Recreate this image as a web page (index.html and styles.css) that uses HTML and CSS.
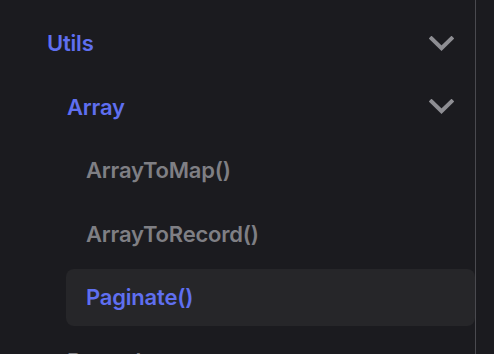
FILE: index.html
```html
<!DOCTYPE html>
<html lang="en">
<head>
<meta charset="utf-8">
<title>Sidebar</title>
<link rel="stylesheet" href="styles.css">
</head>
<body>
<div class="layout">
  <nav class="sidebar">
    <div class="row lvl0">
      <span class="label active">Utils</span>
      <svg class="chev" viewBox="0 0 25 15" width="25" height="15"><path d="M2.5 2.5 L12.5 12.2 L22.5 2.5" fill="none" stroke="currentColor" stroke-width="4" stroke-linecap="square"/></svg>
    </div>
    <div class="row lvl1">
      <span class="label active">Array</span>
      <svg class="chev" viewBox="0 0 25 15" width="25" height="15"><path d="M2.5 2.5 L12.5 12.2 L22.5 2.5" fill="none" stroke="currentColor" stroke-width="4" stroke-linecap="square"/></svg>
    </div>
    <div class="row lvl2">
      <span class="label">ArrayToMap()</span>
    </div>
    <div class="row lvl2">
      <span class="label">ArrayToRecord()</span>
    </div>
    <div class="row lvl2 current">
      <span class="label active">Paginate()</span>
    </div>
    <div class="row lvl1">
      <span class="label">Record</span>
    </div>
  </nav>
  <div class="content"></div>
</div>
</body>
</html>
```

FILE: styles.css
```css
html, body {
  margin: 0;
  padding: 0;
  background: #1b1b1f;
  height: 100%;
  overflow: hidden;
}
.layout {
  display: flex;
  height: 354px;
  overflow: hidden;
}
.sidebar {
  width: 476px;
  flex: none;
  border-right: 1px solid #4a4a4f;
  padding-top: 14.5px;
  box-sizing: border-box;
  font-family: Inter, "Noto Sans", sans-serif;
  font-size: 22px;
  font-weight: 600;
  letter-spacing: -0.2px;
}
.content {
  flex: 1;
}
.row {
  height: 57px;
  margin-bottom: 6.5px;
  display: flex;
  align-items: center;
  justify-content: space-between;
  padding-right: 21.5px;
  border-radius: 8px;
}
.lvl0 { margin-left: 27px; padding-left: 20px; }
.lvl1 { margin-left: 47px; padding-left: 20px; }
.lvl2 { margin-left: 66px; padding-left: 20px; }
.label {
  color: #7f7f84;
  white-space: nowrap;
}
.label.active {
  color: #5f6ff0;
}
.current {
  background: #262629;
}
.chev {
  color: #8e8e93;
  display: block;
}
```
